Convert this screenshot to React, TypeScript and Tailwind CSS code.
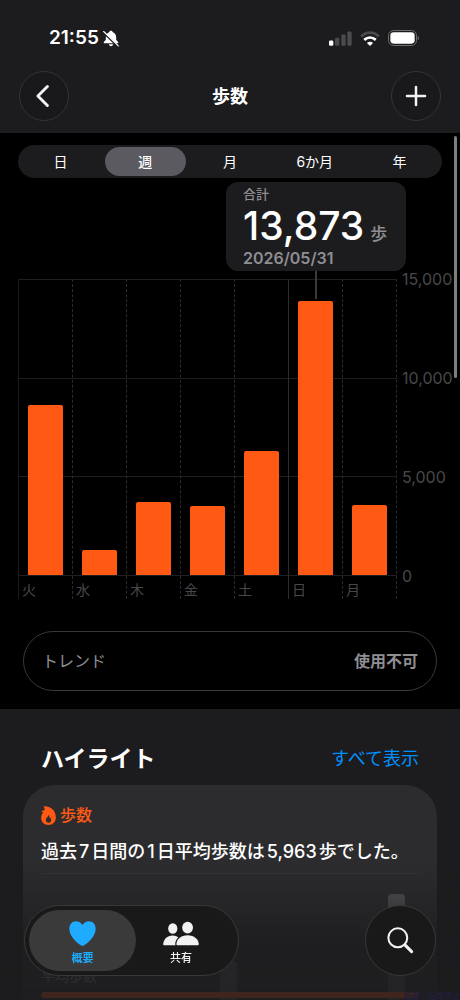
import { useState } from "react";

const RANGES = ["日", "週", "月", "6か月", "年"];

const DAYS = [
  { label: "火", steps: 8630 },
  { label: "水", steps: 1290 },
  { label: "木", steps: 3720 },
  { label: "金", steps: 3490 },
  { label: "土", steps: 6300 },
  { label: "日", steps: 13873, weekStart: true },
  { label: "月", steps: 3560 },
];

const MAX_STEPS = 15000;
const AXIS_TICKS = ["15,000", "10,000", "5,000", "0"];

// bar heights of the small chart inside the highlight card, in percent
const MINI_BARS = [0, 0, 0, 63, 0, 0, 100];

function BellSlashIcon() {
  return (
    <svg viewBox="0 0 48 50" className="h-[17px] w-4" aria-hidden="true">
      <path
        d="M24 2c-3 0-5 2-5.400 4.500C12 9 8.500 14.500 8.500 21v7c0 3-6.500 6-6.500 9.500 0 1.300 1 2 2.500 2h39c1.500 0 2.500-.700 2.500-2 0-3.500-6.500-6.500-6.500-9.500v-7c0-6.500-3.500-12-10.100-14.500C29 4 27 2 24 2zM17.500 42.500h13c-.500 3.500-3 5.500-6.500 5.500s-6-2-6.500-5.500z"
        fill="#fff"
      />
      <path d="M0 6l46 44" stroke="#1c1c1e" strokeWidth="6" />
      <path d="M2 4l44 43" stroke="#fff" strokeWidth="3.500" strokeLinecap="round" />
    </svg>
  );
}

function SignalIcon() {
  return (
    <svg viewBox="0 0 69 44" className="h-[15px] w-[23px]" aria-hidden="true">
      <rect x="0" y="28" width="13" height="16" rx="4" fill="#fff" />
      <rect x="18" y="20" width="13" height="24" rx="4" fill="#4b4b4d" />
      <rect x="37" y="10" width="13" height="34" rx="4" fill="#4b4b4d" />
      <rect x="55" y="1" width="13" height="43" rx="4" fill="#4b4b4d" />
    </svg>
  );
}

function WifiIcon() {
  return (
    <svg viewBox="0 0 58 44" className="h-[15px] w-5" aria-hidden="true">
      <path d="M3 16C18 1 40 1 55 16" fill="none" stroke="#4b4b4d" strokeWidth="8" />
      <path d="M12 26c10-9 24-9 34 0" fill="none" stroke="#fff" strokeWidth="8" />
      <path d="M20 35c5-5 13-5 18 0l-9 9z" fill="#fff" />
    </svg>
  );
}

function BatteryIcon() {
  return (
    <svg viewBox="0 0 96 48" className="h-4 w-8" aria-hidden="true">
      <rect x="1.500" y="1.500" width="84" height="45" rx="15" fill="none" stroke="#6c6c6e" strokeWidth="3" />
      <rect x="7" y="7" width="73" height="34" rx="10" fill="#fff" />
      <path d="M89 17c5 2 5 12 0 14z" fill="#6c6c6e" />
    </svg>
  );
}

function FlameIcon() {
  return (
    <svg viewBox="0 0 44 57" className="h-[19px] w-[15px]" aria-hidden="true">
      <path
        fillRule="evenodd"
        d="M7 1C26-1 44 12 44 34c0 14-9 23-22 23S0 48 0 36c0-8 4-13 6-17-3-1-5-3-5-5 3 1 7 0 9-1 1-4 0-8-3-12zM23 26c-1 5-9 9-9 16 0 5 3 8 8 8s8-3 8-8c0-3-1-6-3-8-1 2-2 3-3 3 1-4 1-7-1-11z"
        fill="#ff5914"
      />
    </svg>
  );
}

function HeartIcon() {
  return (
    <svg viewBox="0 0 80 74" className="h-[25px] w-[27px]" aria-hidden="true">
      <path
        d="M40 74C35 74 1 50 1 23 1 9 10 1 21 1c8 0 15 4 19 11C44 5 51 1 59 1c11 0 20 8 20 22 0 27-34 51-39 51z"
        fill="#1fabff"
      />
    </svg>
  );
}

function PeopleIcon() {
  return (
    <svg viewBox="0 0 114 76" className="h-[25px] w-[38px]" aria-hidden="true">
      <g fill="#f2f2f3">
        <ellipse cx="32" cy="23" rx="14" ry="16" />
        <path d="M3 71c0-15 12-27 29-27 16 0 26 12 26 30H7c-3 0-4-1-4-3z" />
        <ellipse cx="77" cy="20" rx="16.500" ry="18" />
        <path
          d="M43 70c0-14 14-27 34-27s34 13 34 27c0 3-1 4-4 4H47c-3 0-4-1-4-4z"
          stroke="#19191a"
          strokeWidth="7"
          paintOrder="stroke"
        />
      </g>
    </svg>
  );
}

function StatusBar() {
  return (
    <div className="flex h-7 items-center justify-between pr-10 pl-[49px]">
      <div className="flex items-center gap-1">
        <span className="text-[19px] font-semibold">21:55</span>
        <BellSlashIcon />
      </div>
      <div className="flex items-center gap-2">
        <SignalIcon />
        <WifiIcon />
        <BatteryIcon />
      </div>
    </div>
  );
}

function StepChart() {
  return (
    <div className="relative mt-[101px] flex pl-[18px]">
      <div className="relative flex h-[320px] flex-1">
        {/* Grid lines */}
        <div className="absolute inset-x-0 top-0 flex h-[297px] flex-col justify-between">
          {AXIS_TICKS.map((t) => (
            <div key={t} className="h-px bg-[#1f1f21]" />
          ))}
        </div>

        {DAYS.map((d, i) => (
          <div
            key={d.label}
            className={`relative flex flex-1 flex-col border-l ${
              d.weekStart ? "border-[#2c2c2e]" : i === 0 ? "border-[#19191b]" : "border-dashed border-[#2c2c2e]"
            }`}
          >
            <div className="flex h-[296px] shrink-0 items-end pl-[9px]">
              <div
                className="w-[35px] rounded-t-xs bg-[#ff5914]"
                style={{ height: `${(d.steps / MAX_STEPS) * 100}%` }}
              />
            </div>
            <span className="pl-[3px] text-sm leading-[30px] text-[#48484a]">{d.label}</span>
          </div>
        ))}
        <div className="border-l border-dashed border-[#2c2c2e]" />
      </div>

      {/* Axis labels */}
      <div className="-mt-2.5 flex h-[317px] w-[63px] flex-col justify-between pl-[5px] text-base leading-5 text-[#48484a]">
        {AXIS_TICKS.map((t) => (
          <span key={t}>{t}</span>
        ))}
      </div>

      {/* Selected day */}
      <div className="absolute -top-2 right-[143px] h-7 w-0.5 bg-[#3a3a3c]" />
      <div className="absolute -top-[97px] right-[54px] h-[89px] w-[180px] rounded-xl bg-[#1c1c1e] pt-0.5 pl-[17px]">
        <p className="text-[13px] leading-5 font-medium text-[#8e8e93]">合計</p>
        <p className="flex h-11 items-baseline gap-1.5">
          <span className="text-[39px] leading-[44px] font-medium">13,873</span>
          <span className="text-[17px] leading-5 font-medium text-[#8e8e93]">歩</span>
        </p>
        <p className="text-base leading-5 font-semibold text-[#8e8e93]">2026/05/31</p>
      </div>
    </div>
  );
}

function HighlightCard() {
  return (
    <article className="mt-2.5 h-80 rounded-t-[32px] bg-[#2c2c2e] px-[18px] pt-4">
      <h3 className="flex items-center gap-1 text-base leading-7 font-medium text-[#ff5914]">
        <FlameIcon />
        歩数
      </h3>
      <p className="mt-[9px] text-lg leading-7 font-medium whitespace-nowrap">
        過去<span className="mx-0.5">7</span>日間の<span className="mx-0.5">1</span>日平均歩数は
        <span className="mx-0.5">5,963</span>歩でした。
      </p>
      <div className="mt-[7px] h-px bg-[#343436]" />
      <div className="relative h-[200px] pt-5">
        <div className="flex h-full items-end justify-between pr-3.5 pl-3">
          {MINI_BARS.map((h, i) => (
            <div
              key={i}
              className="w-[17px] rounded-t-sm bg-linear-to-b from-[#545457] to-[#48484a]"
              style={{ height: `${h}%` }}
            />
          ))}
        </div>
        <p className="absolute top-[90px] left-0 text-sm leading-6 text-[#8e8e93]">平均歩数</p>
        <div className="absolute inset-x-0 top-[118px] h-1.5 rounded-full bg-[#ff5914]" />
      </div>
    </article>
  );
}

function TabBar() {
  return (
    <div className="fixed inset-x-0 bottom-0 flex items-center justify-between bg-linear-to-t from-[#1c1c1e]/85 via-[#1c1c1e]/83 via-40% to-transparent px-6 pt-10 pb-6">
      <nav className="flex h-[71px] w-[215px] rounded-full border border-[#38383a] bg-[#19191a] p-1">
        <a
          href="#summary"
          aria-current="page"
          className="flex w-[107px] shrink-0 flex-col items-center justify-center rounded-full bg-[#3a3a3b] pt-0.5 text-[11px] leading-4 font-bold text-[#1fabff]"
        >
          <span className="flex h-8 items-center">
            <HeartIcon />
          </span>
          概要
        </a>
        <a
          href="#sharing"
          className="mr-2 flex flex-1 flex-col items-center justify-center pt-0.5 text-[11px] leading-4 font-medium text-[#f2f2f3]"
        >
          <span className="flex h-8 items-center">
            <PeopleIcon />
          </span>
          共有
        </a>
      </nav>
      <button
        type="button"
        aria-label="検索"
        className="flex size-[71px] items-center justify-center rounded-full border border-[#38383a] bg-[#19191a]"
      >
        <svg viewBox="0 0 78 80" className="size-[27px]" fill="none" stroke="#f2f2f3" aria-hidden="true">
          <circle cx="31" cy="32" r="28" strokeWidth="6" />
          <path d="M52 53l20 20" strokeWidth="9" strokeLinecap="round" />
        </svg>
      </button>
      <p className="absolute right-0 bottom-0 text-[8px] leading-2 font-bold text-[#221f3c]">転載・転用禁止</p>
    </div>
  );
}

export default function App() {
  const [range, setRange] = useState("週");

  return (
    <div
      lang="ja"
      className="flex h-screen flex-col overflow-hidden bg-[#1c1c1e] font-['Inter','Noto_Sans_CJK_JP',sans-serif] text-white"
    >
      {/* Header */}
      <header className="shrink-0 pt-6 pb-3">
        <StatusBar />
        <div className="mt-[19px] flex items-center justify-between px-[19px]">
          <button
            type="button"
            aria-label="戻る"
            className="flex size-[50px] items-center justify-center rounded-full border border-[#343436] bg-[#19191b]"
          >
            <svg viewBox="0 0 40 66" className="mr-1 h-[22px] w-[13px]" fill="none" stroke="#f2f2f3" aria-hidden="true">
              <path d="M35 4L6 33l29 29" strokeWidth="9" strokeLinecap="round" strokeLinejoin="round" />
            </svg>
          </button>
          <h1 className="pt-0.5 text-lg font-bold">歩数</h1>
          <button
            type="button"
            aria-label="データを追加"
            className="flex size-[50px] items-center justify-center rounded-full border border-[#343436] bg-[#19191b]"
          >
            <svg viewBox="0 0 22 22" className="size-[22px]" fill="none" stroke="#f2f2f3" aria-hidden="true">
              <path d="M11 2v18M2 11h18" strokeWidth="2.500" strokeLinecap="round" />
            </svg>
          </button>
        </div>
      </header>

      <main className="relative flex-1 overflow-y-auto [scrollbar-width:none]">
        <section className="bg-black pt-3 pb-[18px]">
          <div className="mx-[18px] flex h-[33px] rounded-full bg-[#1c1c1e] py-0.5">
            {RANGES.map((r) => (
              <button
                key={r}
                type="button"
                aria-pressed={range === r}
                onClick={() => setRange(r)}
                className={`mx-0.5 flex-1 rounded-full text-sm leading-5 ${range === r ? "bg-[#5b5a60] font-medium" : ""}`}
              >
                {r}
              </button>
            ))}
          </div>

          <StepChart />

          <div className="mx-[23px] mt-8 flex h-[60px] items-center justify-between rounded-full border border-[#38383a] px-[18px] text-[#8e8e93]">
            <span>トレンド</span>
            <span className="font-bold">使用不可</span>
          </div>
        </section>

        <section className="px-[23px] pt-[34px]">
          <div className="flex h-8 items-center justify-between px-[18px]">
            <h2 className="text-[23px] font-bold">ハイライト</h2>
            <a href="#all" className="text-lg text-[#0091ff]">
              すべて表示
            </a>
          </div>
          <HighlightCard />
        </section>

        <div className="absolute top-[3px] right-[3px] h-[242px] w-[3px] rounded-full bg-[#7f7f7f]" />
      </main>

      <TabBar />
    </div>
  );
}
